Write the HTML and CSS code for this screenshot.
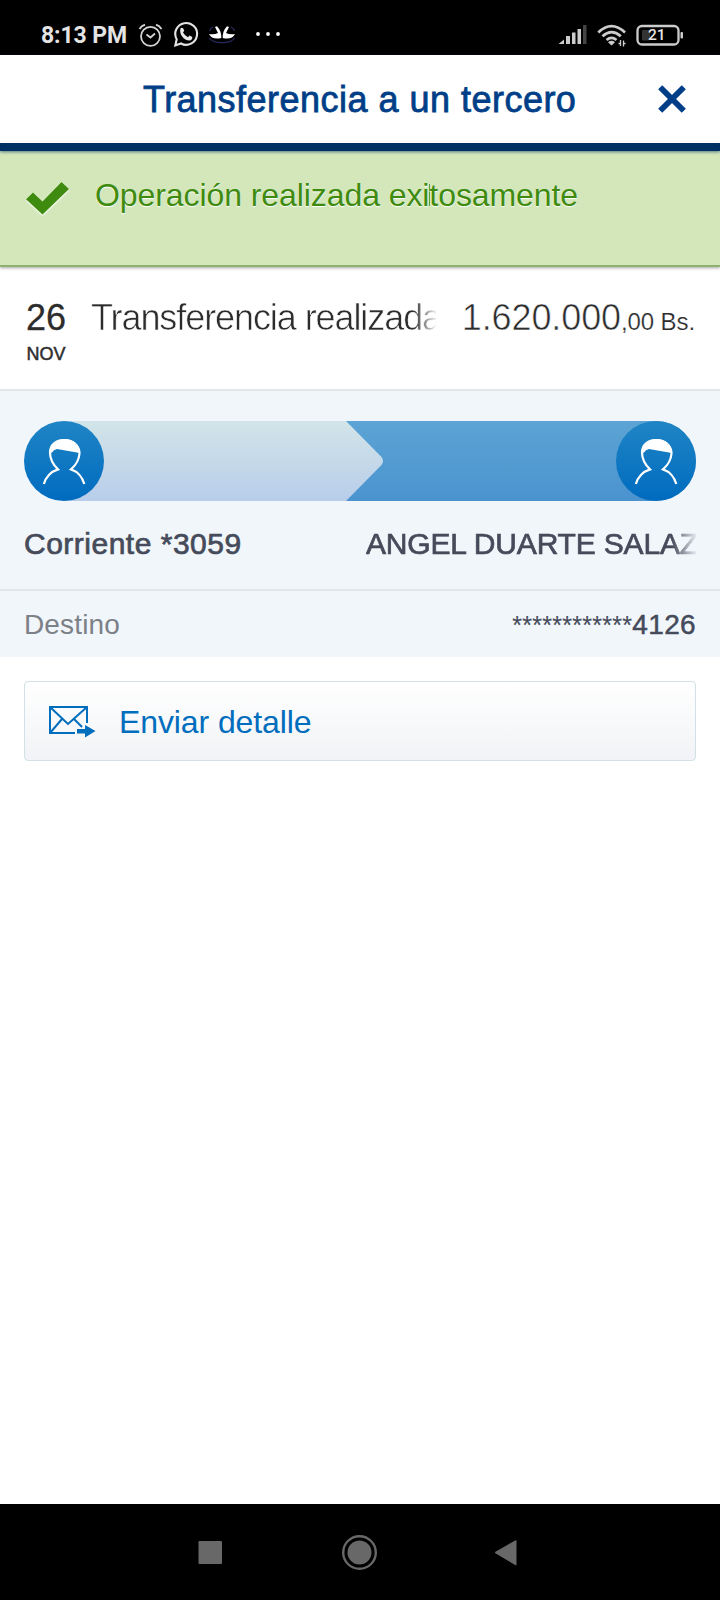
FILE: index.html
```
<!DOCTYPE html>
<html lang="es">
<head>
<meta charset="utf-8">
<title>Transferencia a un tercero</title>
<link rel="stylesheet" href="styles.css">
</head>
<body>
<svg width="0" height="0" class="defs">
  <defs>
    <symbol id="person" viewBox="0 0 80 80">
      <path d="M19.900 63C21.500 56.500 27 50.500 34 48.400C29.500 44 26 38.500 26 31.500C26 23.500 32.500 19 40.500 19S55.500 24.500 55.500 32.500C55 39 51.500 44.500 47 48.400C53.500 50.500 58.500 56.500 60.300 63" fill="none" stroke="#fff" stroke-width="2.200"/>
      <path d="M26 32C25 23 31.500 18 40.500 18S56.500 24 55.800 32L33 28Q29.500 28.500 28 31.500Z" fill="#fff"/>
    </symbol>
  </defs>
</svg>
<div class="screen">
  <div class="status">
    <span class="clock">8:13 PM</span>
    <svg class="status-left" width="150" height="36" viewBox="135 16 150 36" fill="none" stroke="#d4d4d4">
      <circle cx="150.500" cy="36.300" r="9.500" stroke-width="1.800"/>
      <path d="M139.500 29Q141.500 26 145 24.700M156 24.700Q159.500 26 161.500 29" stroke-width="1.900"/>
      <path d="M146.500 34.500L150.500 37.500L155 33.500" stroke-width="1.800"/>
      <path d="M175.300 45.500L176.700 39.300A10.900 10.900 0 1 1 181 43.500Z" stroke="#e4e4e4" stroke-width="2.100"/>
      <path d="M180.600 28.200Q182 27 183.300 28.500L184.200 30.800L183 32.500Q185 36 188 37.200L189.500 35.600L192.300 37Q192.500 40 189.300 40.600C184 40.500 178.500 34 180.600 28.200Z" fill="#e8e8e8" stroke="none"/>
      <path d="M209.500 38Q212 42.700 222 42.700T234.500 38M209.500 31Q210 28.500 213 27M234.500 31Q234 28.500 231 27" stroke="#282a60" stroke-width="1.300"/>
      <path d="M209 34Q214 35 218 33L215 27L217 26.300Q221.500 31 221.300 38Q212 40 209 34ZM235 34Q230 35 226 33L229 27L227 26.300Q222.500 31 222.700 38Q232 40 235 34Z" fill="#fff" stroke="none"/>
      <g fill="#fff" stroke="none"><circle cx="258" cy="34" r="1.900"/><circle cx="268" cy="34" r="1.900"/><circle cx="278" cy="34" r="1.900"/></g>
    </svg>
    <div class="status-right">
      <svg width="130" height="36" viewBox="555 16 130 36" fill="none" stroke="#ccc">
        <g stroke="none" fill="#ccc"><path d="M558.500 44L564 39.500V44Z"/><rect x="566" y="36" width="4" height="8"/><rect x="572" y="32.500" width="3.500" height="11.500"/><rect x="577.500" y="29" width="3.500" height="15"/><rect x="583" y="25" width="3.500" height="19" fill="#444"/></g>
        <path d="M598.300 32.500Q611.500 19.800 625 32.500M602.500 36.200Q611.500 28 620.800 36.200M606.600 40Q611.500 35.800 616.500 40" stroke-width="2.700"/>
        <path d="M608 42.200Q611.500 39.500 615 42.200L611.500 45.500Z" fill="#ccc" stroke="none"/>
        <path d="M620.500 40V46M623.500 40.500V46.500M618.500 43.500H620M624 43.500H625.500" stroke-width="1.300"/>
        <rect x="637.500" y="26" width="41" height="18.500" rx="4.500" stroke-width="2.300"/>
        <rect x="642" y="30" width="8" height="10.500" rx="1" fill="#333" stroke="none"/>
        <rect x="680.500" y="32" width="2.500" height="6.500" rx="1" fill="#ccc" stroke="none"/>
      </svg>
      <span class="charge">21</span>
    </div>
  </div>
  <header class="header">
    <h1>Transferencia a un tercero</h1>
    <svg class="close" width="30" height="30" viewBox="0 0 30 30"><path d="M3.200 3.200L26.800 26.800M26.800 3.200L3.200 26.800" stroke="#003f87" stroke-width="5.800"/></svg>
  </header>
  <section class="notice">
    <svg class="tick" width="46" height="36" viewBox="0 0 46 36"><path d="M1 18.300L8 11.500L17.500 20.500L36.500 1L44 8L17.500 33.500Z" fill="#3f8b10"/></svg>
    <p>Operación realizada exi<span class="caret"></span>tosamente</p>
  </section>
  <section class="summary">
    <div class="date"><span class="day">26</span><span class="month">NOV</span></div>
    <div class="concept">Transferencia realizada</div>
    <div class="amount">1.620.000<small>,00 Bs.</small></div>
  </section>
  <section class="parties">
    <div class="flow">
      <span class="avatar"><svg width="80" height="80"><use href="#person"/></svg></span>
      <svg class="arrow" width="359" height="80" viewBox="0 0 359 80">
        <defs><linearGradient id="pale" x2="0" y2="1"><stop stop-color="#d2e5e9"/><stop offset="1" stop-color="#b8cdea"/></linearGradient></defs>
        <path d="M40 0H322L357.500 36Q360.500 40 357.500 44L322 80H40Z" fill="url(#pale)"/>
      </svg>
      <span class="avatar"><svg width="80" height="80"><use href="#person"/></svg></span>
    </div>
    <div class="names"><span class="from">Corriente *3059</span><span class="to">ANGEL DUARTE SALAZ</span></div>
  </section>
  <section class="target">
    <span class="label">Destino</span>
    <span class="account"><span class="stars">************</span>4126</span>
  </section>
  <a class="send">
    <svg width="48" height="36" viewBox="48 703 48 36" fill="none" stroke="#006dbd" stroke-width="2">
      <path d="M75 733H50V707H87V723M50 707L68 724L87 707M50 733L62 719M74 719L82 727"/>
      <path d="M77 729H85V725L95.500 731L85 737.500V733.500H77Z" fill="#006dbd" stroke="none"/>
    </svg>
    <span class="send-label">Enviar detalle</span>
  </a>
  <nav class="nav">
    <svg width="720" height="96" viewBox="0 1504 720 96" fill="#686868">
      <rect x="198.500" y="1541" width="23.500" height="23" rx="1"/>
      <circle cx="359.500" cy="1552.500" r="12"/><circle cx="359.500" cy="1552.500" r="16.300" fill="none" stroke="#686868" stroke-width="2.400"/>
      <path d="M495 1552.500L516 1540.500V1565Z" stroke="#686868" stroke-linejoin="round"/>
    </svg>
  </nav>
</div>
</body>
</html>
```
FILE: styles.css
```
* { box-sizing: border-box; }
body { margin: 0; background: #fff; font-family: "Liberation Sans", Arial, sans-serif; }
h1, p { margin: 0; font-weight: 400; }
svg { display: block; flex: none; }
.defs { position: absolute; }
.screen { width: 720px; height: 1600px; display: flex; flex-direction: column; overflow: hidden; }
.screen > * { flex: none; white-space: nowrap; }

.status { height: 55px; background: #000; display: flex; padding: 16px 35px 0 41px; color: #e4e4e4; font-family: Roboto, sans-serif; }
.clock { width: 94px; font-size: 23px; font-weight: 700; line-height: 39px; letter-spacing: -.1px; }
.status-right { margin-left: auto; position: relative; }
.charge { position: absolute; left: 93px; top: 10px; font-size: 15.5px; line-height: 18px; font-weight: 500; }

.header { height: 96px; border-bottom: 8px solid #003165; display: flex; padding: 24px 33px 0 143px; justify-content: space-between; position: relative; box-shadow: 0 1px 3px rgba(0, 49, 101, .6); }
.header h1 { font-size: 36px; line-height: 42px; letter-spacing: .48px; color: #003f87; -webkit-text-stroke: .8px #003f87; }
.close { margin-top: 5px; }

.notice { height: 116px; background: #d4e7bb; border-bottom: 2px solid #8fb070; box-shadow: 0 1px 3px rgba(0, 0, 0, .35); display: flex; padding: 24px 0 0 25px; color: #3f8b10; }
.tick { margin-top: 6px; filter: drop-shadow(0 1px 1px #fff); }
.notice p { margin-left: 24px; font-size: 32px; line-height: 40px; letter-spacing: -.08px; text-shadow: 0 1px 1px #fff; }
.caret { display: inline-block; width: 1px; height: 22px; margin: 0 -1px 0 0; background: #5c9a35; }

.summary { height: 124px; border-bottom: 2px solid #e3e5e6; display: flex; padding: 30px 25px 0 25px; color: #2c2c2c; }
.date { width: 42px; display: flex; flex-direction: column; align-items: center; }
.day { font-size: 36px; line-height: 42px; -webkit-text-stroke: .3px #333; }
.month { font-size: 18px; line-height: 22px; margin-top: 4px; -webkit-text-stroke: .5px #333; }
.concept { margin-left: 24px; width: 345px; font-size: 36px; line-height: 42px; height: 46px; letter-spacing: -1.08px; -webkit-text-stroke: .6px #fff; -webkit-mask-image: linear-gradient(to right, #000 322px, transparent 347px); mask-image: linear-gradient(to right, #000 322px, transparent 347px); }
.amount { margin-left: auto; font-size: 36px; line-height: 42px; letter-spacing: -.1px; -webkit-text-stroke: .6px #fff; }
.amount small { font-size: 24px; -webkit-text-stroke: .2px #fff; }

.parties { height: 200px; background: #f1f6fb; border-bottom: 2px solid #e3e5e6; padding: 30px 24px 0; }
.flow { height: 80px; display: flex; justify-content: space-between; border-radius: 40px; background: linear-gradient(to right, #f1f6fb 60px, transparent 60px), linear-gradient(#5ca4d4, #4a93cf); }
.avatar { position: relative; z-index: 1; width: 80px; height: 80px; border-radius: 50%; background: linear-gradient(#2085c5, #006bbf); }
.arrow { margin-left: -80px; margin-right: auto; }
.names { display: flex; justify-content: space-between; margin-top: 22px; font-size: 30px; line-height: 41px; color: #454b5a; -webkit-text-stroke: .7px #454b5a; }
.from { letter-spacing: .5px; }
.to { width: 330px; letter-spacing: -.18px; -webkit-mask-image: linear-gradient(to right, #000 306px, transparent 332px); mask-image: linear-gradient(to right, #000 306px, transparent 332px); }

.target { height: 66px; background: #f1f6fb; display: flex; justify-content: space-between; padding: 15px 24px 0; font-size: 28px; line-height: 38px; }
.label { color: #7c8087; letter-spacing: .15px; }
.account { color: #454b5a; letter-spacing: .35px; -webkit-text-stroke: .5px #454b5a; }
.stars { font-size: 25px; letter-spacing: .28px; -webkit-text-stroke: .1px #454b5a; }

.send { height: 80px; margin: 24px 24px 0; border: 1px solid #d3e0e5; border-radius: 4px; background: linear-gradient(#fff, #f1f3f6); display: flex; align-items: center; padding-left: 23px; gap: 23px; font-size: 32px; color: #006dbd; }
.send-label { padding-top: 2px; letter-spacing: -.1px; }
.nav { margin-top: auto; height: 96px; background: #000; }
```
